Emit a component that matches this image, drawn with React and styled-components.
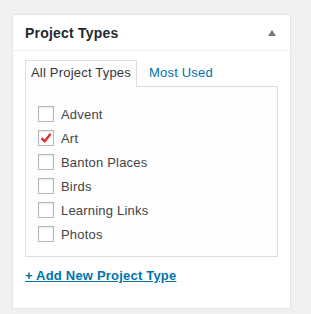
import React from "react";
import styled, { createGlobalStyle } from "styled-components";

const GlobalStyle = createGlobalStyle`
  body {
    margin: 0;
    background: #f1f1f1;
    font-family: "Liberation Sans", Arial, sans-serif;
    color: #444;
  }
`;

const Page = styled.div`
  padding: 14px 0 0 12px;
`;

const Box = styled.div`
  width: 277px;
  background: #fff;
  border: 1px solid #e5e5e5;
  box-shadow: 0 1px 1px rgba(0, 0, 0, 0.04);
`;

const Header = styled.div`
  display: flex;
  align-items: center;
  justify-content: space-between;
  height: 35px;
  padding: 0 12px;
  border-bottom: 1px solid #eee;
`;

const Title = styled.h2`
  margin: 0;
  font-size: 14px;
  font-weight: 700;
  letter-spacing: 0.2px;
  color: #23282d;
`;

const Toggle = styled.span`
  width: 0;
  height: 0;
  margin-right: 2px;
  border-left: 4px solid transparent;
  border-right: 4px solid transparent;
  border-bottom: 6px solid #72777c;
`;

const Inside = styled.div`
  padding: 9px 12px 23px;
`;

const Tabs = styled.div`
  display: flex;
  align-items: flex-end;
  gap: 6px;
  font-size: 13px;
  line-height: 18px;
  letter-spacing: 0.2px;
`;

const Tab = styled.div`
  padding: 3px 5px 5px;
  border: 1px solid ${(p) => (p.$active ? "#ddd" : "transparent")};
  border-bottom: none;
  background: ${(p) => (p.$active ? "#fdfdfd" : "transparent")};
  color: ${(p) => (p.$active ? "#32373c" : "#0073aa")};
  margin-bottom: -1px;
  position: relative;
  z-index: 1;
`;

const Panel = styled.ul`
  list-style: none;
  margin: 0;
  padding: 15px 12px 10px;
  border: 1px solid #ddd;
  background: #fdfdfd;
`;

const Item = styled.li`
  display: flex;
  align-items: center;
  gap: 7px;
  height: 24px;
  font-size: 13px;
  letter-spacing: 0.2px;
  color: #444;
`;

const Check = styled.span`
  display: flex;
  align-items: center;
  justify-content: center;
  width: 14px;
  height: 14px;
  border: 1px solid #b4b9be;
  background: #fff;
  box-shadow: inset 0 1px 2px rgba(0, 0, 0, 0.1);
`;

const AddLink = styled.a`
  display: inline-block;
  margin-top: 10px;
  font-size: 13px;
  line-height: 18px;
  font-weight: 700;
  letter-spacing: 0.2px;
  color: #0073aa;
  text-decoration: underline;
`;

const types = [
  { name: "Advent" },
  { name: "Art", checked: true },
  { name: "Banton Places" },
  { name: "Birds" },
  { name: "Learning Links" },
  { name: "Photos" },
];

const Tick = () => (
  <svg width="14" height="14" viewBox="0 0 14 14">
    <path d="M2.5 7.2 L5.6 10.4 L11.6 2.8" fill="none" stroke="#dc3232" strokeWidth="2.4" strokeLinejoin="round" />
  </svg>
);

export default function App() {
  return (
    <Page>
      <GlobalStyle />
      <Box>
        <Header>
          <Title>Project Types</Title>
          <Toggle />
        </Header>
        <Inside>
          <Tabs>
            <Tab $active>All Project Types</Tab>
            <Tab>Most Used</Tab>
          </Tabs>
          <Panel>
            {types.map((t) => (
              <Item key={t.name}>
                <Check>{t.checked && <Tick />}</Check>
                {t.name}
              </Item>
            ))}
          </Panel>
          <AddLink href="#">+ Add New Project Type</AddLink>
        </Inside>
      </Box>
    </Page>
  );
}
